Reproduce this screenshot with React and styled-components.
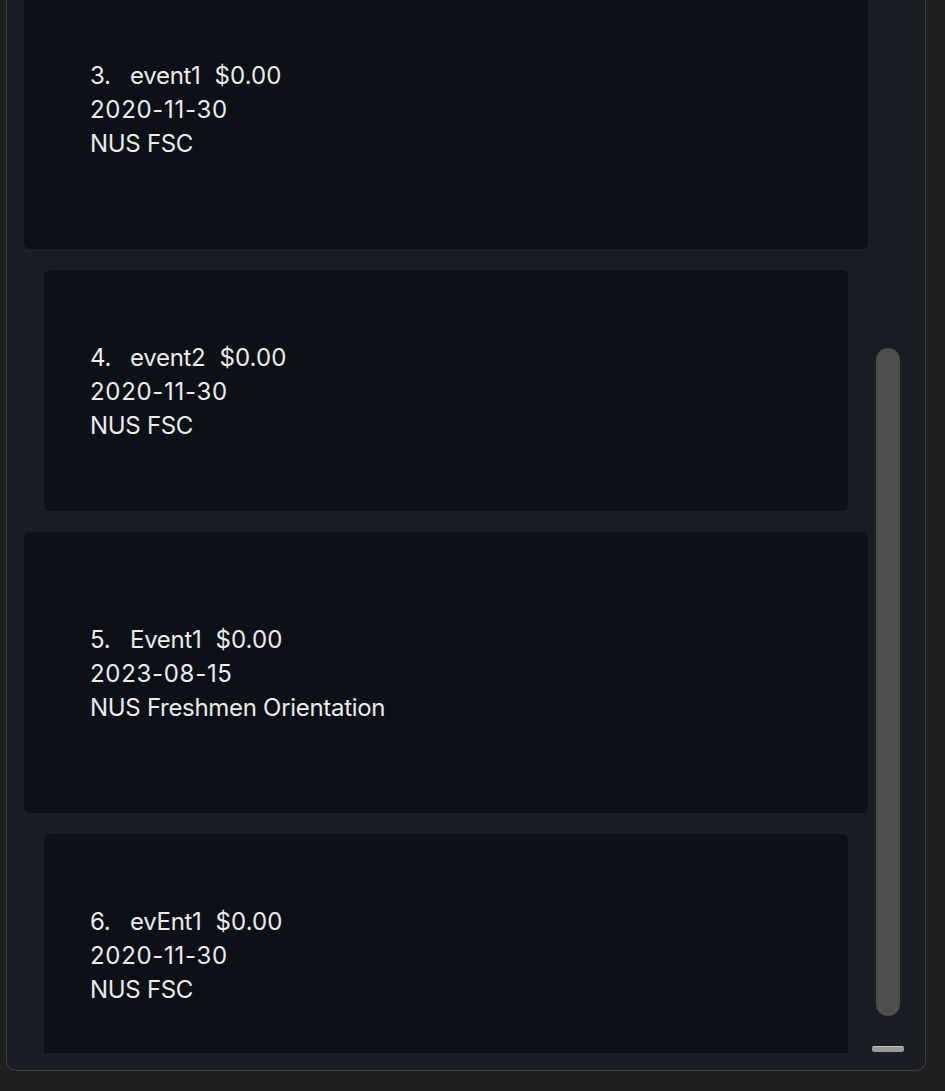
import React from 'react';
import styled, { createGlobalStyle } from 'styled-components';

const GlobalStyle = createGlobalStyle`
    html, body {
        margin:0;
        padding:0;
        background:#1f1f1f;
        font-family:Inter, "Noto Sans", sans-serif;
    }
`

const Page = styled.div`
    width:945px;
    height:1091px;
    padding:0 0 0 6px;
    box-sizing:border-box;
    overflow:hidden;
`

const Panel = styled.div`
    width:920px;
    height:1071px;
    box-sizing:border-box;
    background:#1a1d23;
    border:1px solid #3a3d43;
    border-top:none;
    border-radius:0 0 10px 10px;
    display:flex;
    flex-direction:row;
    padding:0 0 17px 17px;
`

const Viewport = styled.div`
    width:844px;
    height:100%;
    overflow:hidden;
`

const List = styled.div`
    display:flex;
    flex-direction:column;
    gap:21px;
    margin-top:-32px;
`

const Card = styled.div`
    background:#0d1016;
    border-radius:6px;
    height:${p => p.$inset ? '241px' : '281px'};
    margin:${p => p.$inset ? '0 20px' : '0'};
    padding-left:${p => p.$inset ? '46px' : '66px'};
    padding-top:2px;
    box-sizing:border-box;
    display:flex;
    flex-direction:column;
    justify-content:center;
    color:#eaebed;
    font-size:24px;
    line-height:34px;
    letter-spacing:-0.3px;
    flex-shrink:0;
`

const TitleRow = styled.div`
    display:flex;
    flex-direction:row;
`

const Index = styled.span`
    width:40px;
`

const Price = styled.span`
    margin-left:14px;
    letter-spacing:0.1px;
`

const DateLine = styled.div`
    letter-spacing:0.7px;
`

const ScrollColumn = styled.div`
    width:40px;
    display:flex;
    flex-direction:column;
    align-items:center;
    padding:348px 0 0 0;
    box-sizing:border-box;
`

const Thumb = styled.div`
    width:24px;
    height:668px;
    border-radius:12px;
    background:#4e4e4f;
`

const Grip = styled.div`
    width:32px;
    height:6px;
    margin-top:30px;
    border-radius:2px;
    background:#9a9a9a;
    border-top:1px solid #c4c4c4;
    box-sizing:border-box;
`

const events = [
    { name: 'event1', date: '2020-11-30', place: 'NUS FSC' },
    { name: 'event2', date: '2020-11-30', place: 'NUS FSC' },
    { name: 'Event1', date: '2023-08-15', place: 'NUS Freshmen Orientation' },
    { name: 'evEnt1', date: '2020-11-30', place: 'NUS FSC' },
]

const App = () => {
    return (
        <>
        <GlobalStyle />
        <Page>
            <Panel>
                <Viewport>
                    <List>
                        {events.map((e, i) => (
                            <Card key={i} $inset={i % 2 === 1}>
                                <TitleRow>
                                    <Index>{i + 3}.</Index>
                                    <span>{e.name}</span>
                                    <Price>$0.00</Price>
                                </TitleRow>
                                <DateLine>{e.date}</DateLine>
                                <div>{e.place}</div>
                            </Card>
                        ))}
                    </List>
                </Viewport>
                <ScrollColumn>
                    <Thumb />
                    <Grip />
                </ScrollColumn>
            </Panel>
        </Page>
        </>
    )
}

export default App;
